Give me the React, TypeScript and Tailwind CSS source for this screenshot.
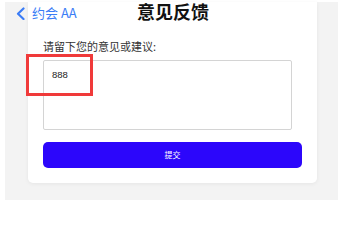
export default function App() {
  return (
    <div className="relative h-[200px] w-[346px] overflow-hidden bg-white font-['Noto_Sans_CJK_SC',sans-serif]">
      {/* gray page background with the white feedback card */}
      <div className="ml-[5px] mt-[2px] h-[198px] w-[333px] bg-[#f3f3f3] pl-[23px]">
        <div className="w-[289px] rounded-b-[5px] bg-white px-[15px] pb-[15px] pt-[37px] shadow-[0_1px_4px_rgba(0,0,0,0.06)]">
          <div className="text-[11px] leading-[14px] text-[#333]">
            请留下您的意见或建议:
          </div>
          <div className="mt-[7px] h-[70px] w-[249px] rounded-[2px] border border-[#d4d4d4] px-[8px] pt-[8px] font-['Liberation_Sans',sans-serif] text-[9.5px] leading-[12px] text-[#222]">
            888
          </div>
          <button className="mt-[12px] flex h-[26px] w-full items-center justify-center rounded-[5px] bg-[#2c06fb] text-[8px] text-white">
            提交
          </button>
        </div>
      </div>

      {/* navigation bar lying over the page */}
      <div className="absolute left-0 top-0 flex h-[22px] w-full items-center justify-center">
        <div className="absolute left-[15px] top-[5px] flex items-center gap-[6px] text-[#3a7cf6]">
          <svg width="11" height="13" viewBox="0 0 11 13" fill="none">
            <path d="M8.5 1.5 L3 6.8 L8.5 12" stroke="currentColor" strokeWidth="2.2" strokeLinecap="round" strokeLinejoin="round" />
          </svg>
          <span className="text-[13px] leading-[16px]">约会 AA</span>
        </div>
        <div className="text-[18px] font-bold leading-[22px] text-[#111]">意见反馈</div>
      </div>

      {/* red highlight box */}
      <div className="absolute left-[26px] top-[54px] h-[42px] w-[67px] border-[3px] border-[#f03a3a]" />
    </div>
  );
}
